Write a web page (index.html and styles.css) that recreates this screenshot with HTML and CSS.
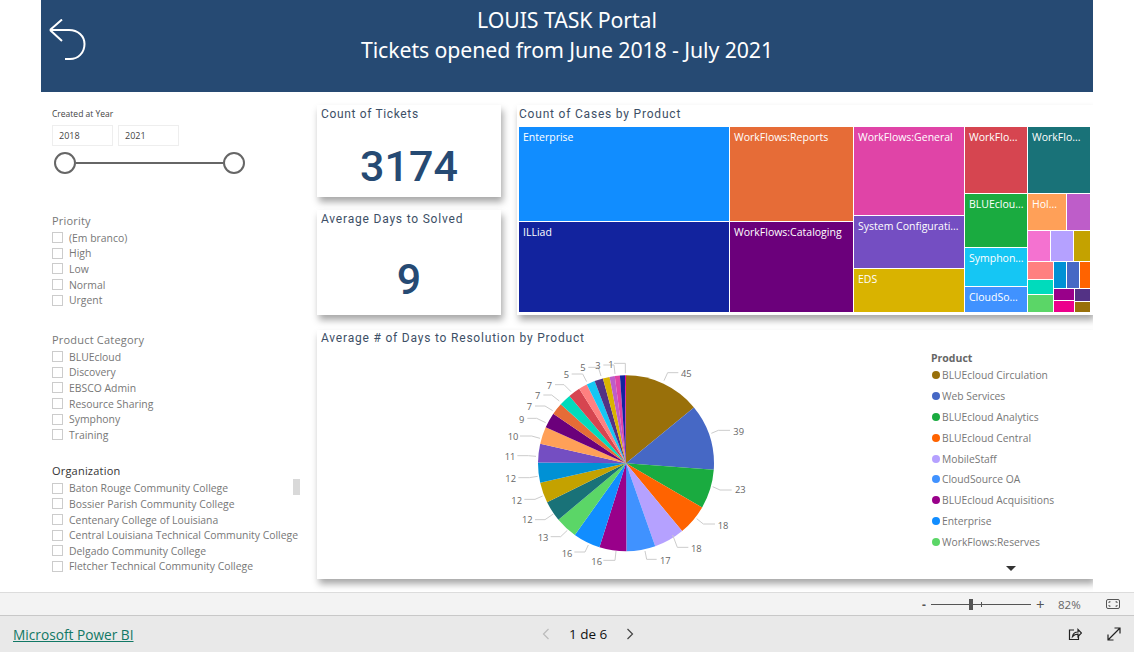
FILE: index.html
```html
<!DOCTYPE html>
<html lang="en">

<head>
    <meta charset="UTF-8">
    <meta name="viewport" content="width=device-width, initial-scale=1.0">
    <title>LOUIS TASK Portal</title>
    <link rel="stylesheet" href="styles.css">
</head>

<body>
    <div class="stage">
        <div class="report">
            <header class="banner">
                <svg class="back-icon" viewBox="0 0 37 42">
                    <path d="M1 11 L13 0.5 M1 11 L13 22 M1 11 H20 C29 11 35.5 17 35.5 25 C35.5 34 29 40 21 40 H16" />
                </svg>
                <h1>LOUIS TASK Portal<br>Tickets opened from June 2018 - July 2021</h1>
            </header>

            <div class="canvas">
                <aside class="filters">
                    <div class="year-slicer">
                        <div class="slicer-caption">Created at Year</div>
                        <div class="year-inputs">
                            <div class="year-box">2018</div>
                            <div class="year-box">2021</div>
                        </div>
                        <div class="year-range">
                            <span class="handle"></span>
                            <span class="range-line"></span>
                            <span class="handle"></span>
                        </div>
                    </div>

                    <div class="slicer slicer-priority">
                        <h3>Priority</h3>
                        <div class="check-row"><span class="box"></span>(Em branco)</div>
                        <div class="check-row"><span class="box"></span>High</div>
                        <div class="check-row"><span class="box"></span>Low</div>
                        <div class="check-row"><span class="box"></span>Normal</div>
                        <div class="check-row"><span class="box"></span>Urgent</div>
                    </div>

                    <div class="slicer slicer-category">
                        <h3>Product Category</h3>
                        <div class="check-row"><span class="box"></span>BLUEcloud</div>
                        <div class="check-row"><span class="box"></span>Discovery</div>
                        <div class="check-row"><span class="box"></span>EBSCO Admin</div>
                        <div class="check-row"><span class="box"></span>Resource Sharing</div>
                        <div class="check-row"><span class="box"></span>Symphony</div>
                        <div class="check-row"><span class="box"></span>Training</div>
                    </div>

                    <div class="slicer slicer-org">
                        <h3 class="dark">Organization</h3>
                        <div class="check-row"><span class="box"></span>Baton Rouge Community College</div>
                        <div class="check-row"><span class="box"></span>Bossier Parish Community College</div>
                        <div class="check-row"><span class="box"></span>Centenary College of Louisiana</div>
                        <div class="check-row"><span class="box"></span>Central Louisiana Technical Community College</div>
                        <div class="check-row"><span class="box"></span>Delgado Community College</div>
                        <div class="check-row"><span class="box"></span>Fletcher Technical Community College</div>
                        <span class="org-scroll"></span>
                    </div>
                </aside>

                <main class="visuals">
                    <div class="top-row">
                        <div class="kpi-stack">
                            <section class="card kpi kpi-count">
                                <div class="card-title">Count of Tickets</div>
                                <div class="kpi-value">3174</div>
                            </section>
                            <section class="card kpi kpi-days">
                                <div class="card-title">Average Days to Solved</div>
                                <div class="kpi-value">9</div>
                            </section>
                        </div>

                        <section class="card tree-card">
                            <div class="card-title">Count of Cases by Product</div>
                            <div class="tree">
                                <div class="tcol t-w210">
                                    <div class="tile c-enterprise t-h94">Enterprise</div>
                                    <div class="tile c-illiad t-grow">ILLiad</div>
                                </div>
                                <div class="tcol t-w123">
                                    <div class="tile c-reports t-h94">WorkFlows:Reports</div>
                                    <div class="tile c-cataloging t-grow">WorkFlows:Cataloging</div>
                                </div>
                                <div class="tcol t-w110">
                                    <div class="tile c-general t-h88">WorkFlows:General</div>
                                    <div class="tile c-system t-h52">System Configurati...</div>
                                    <div class="tile c-eds t-grow">EDS</div>
                                </div>
                                <div class="tcol t-w62">
                                    <div class="tile c-red t-h66">WorkFlo...</div>
                                    <div class="tile c-green t-h53">BLUEclou...</div>
                                    <div class="tile c-cyan t-h38">Symphon...</div>
                                    <div class="tile c-cloud t-grow">CloudSo...</div>
                                </div>
                                <div class="tcol t-grow">
                                    <div class="tile c-teal t-h66">WorkFlo...</div>
                                    <div class="trow t-h36">
                                        <div class="tile c-peach t-grow">Hol...</div>
                                        <div class="tile c-orchid t-w23"></div>
                                    </div>
                                    <div class="trow t-h30">
                                        <div class="tile c-pink t-grow"></div>
                                        <div class="tile c-lav t-grow"></div>
                                        <div class="tile c-gold t-w16"></div>
                                    </div>
                                    <div class="trow t-grow">
                                        <div class="tcol t-w25">
                                            <div class="tile c-salmon t-h17"></div>
                                            <div class="tile c-mint t-h14"></div>
                                            <div class="tile c-lime t-grow"></div>
                                        </div>
                                        <div class="tcol t-grow">
                                            <div class="trow t-h26">
                                                <div class="tile c-sky t-grow"></div>
                                                <div class="tile c-indigo t-grow"></div>
                                                <div class="tile c-orange t-w10"></div>
                                            </div>
                                            <div class="trow t-grow">
                                                <div class="tcol t-grow">
                                                    <div class="tile c-violet t-h11"></div>
                                                    <div class="tile c-magenta t-grow"></div>
                                                </div>
                                                <div class="tcol t-w15">
                                                    <div class="tile c-plum t-h12"></div>
                                                    <div class="tile c-brown t-grow"></div>
                                                </div>
                                            </div>
                                        </div>
                                    </div>
                                </div>
                            </div>
                        </section>
                    </div>

                    <section class="card pie-card">
                        <div class="card-title">Average # of Days to Resolution by Product</div>
                        <svg class="pie" viewBox="0 0 810 705">
                            <g transform="rotate(-90 408 340)" fill="none" stroke-width="264">
                                <circle class="s1" cx="408" cy="340" r="132" pathLength="321" stroke-dasharray="45 276" stroke-dashoffset="0" />
                                <circle class="s2" cx="408" cy="340" r="132" pathLength="321" stroke-dasharray="39 282" stroke-dashoffset="-45" />
                                <circle class="s3" cx="408" cy="340" r="132" pathLength="321" stroke-dasharray="23 298" stroke-dashoffset="-84" />
                                <circle class="s4" cx="408" cy="340" r="132" pathLength="321" stroke-dasharray="18 303" stroke-dashoffset="-107" />
                                <circle class="s5" cx="408" cy="340" r="132" pathLength="321" stroke-dasharray="18 303" stroke-dashoffset="-125" />
                                <circle class="s6" cx="408" cy="340" r="132" pathLength="321" stroke-dasharray="17 304" stroke-dashoffset="-143" />
                                <circle class="s7" cx="408" cy="340" r="132" pathLength="321" stroke-dasharray="16 305" stroke-dashoffset="-160" />
                                <circle class="s8" cx="408" cy="340" r="132" pathLength="321" stroke-dasharray="16 305" stroke-dashoffset="-176" />
                                <circle class="s9" cx="408" cy="340" r="132" pathLength="321" stroke-dasharray="13 308" stroke-dashoffset="-192" />
                                <circle class="s10" cx="408" cy="340" r="132" pathLength="321" stroke-dasharray="12 309" stroke-dashoffset="-205" />
                                <circle class="s11" cx="408" cy="340" r="132" pathLength="321" stroke-dasharray="12 309" stroke-dashoffset="-217" />
                                <circle class="s12" cx="408" cy="340" r="132" pathLength="321" stroke-dasharray="12 309" stroke-dashoffset="-229" />
                                <circle class="s13" cx="408" cy="340" r="132" pathLength="321" stroke-dasharray="11 310" stroke-dashoffset="-241" />
                                <circle class="s14" cx="408" cy="340" r="132" pathLength="321" stroke-dasharray="10 311" stroke-dashoffset="-252" />
                                <circle class="s15" cx="408" cy="340" r="132" pathLength="321" stroke-dasharray="9 312" stroke-dashoffset="-262" />
                                <circle class="s16" cx="408" cy="340" r="132" pathLength="321" stroke-dasharray="7 314" stroke-dashoffset="-271" />
                                <circle class="s17" cx="408" cy="340" r="132" pathLength="321" stroke-dasharray="7 314" stroke-dashoffset="-278" />
                                <circle class="s18" cx="408" cy="340" r="132" pathLength="321" stroke-dasharray="7 314" stroke-dashoffset="-285" />
                                <circle class="s19" cx="408" cy="340" r="132" pathLength="321" stroke-dasharray="5 316" stroke-dashoffset="-292" />
                                <circle class="s20" cx="408" cy="340" r="132" pathLength="321" stroke-dasharray="5 316" stroke-dashoffset="-297" />
                                <circle class="s21" cx="408" cy="340" r="132" pathLength="321" stroke-dasharray="5 316" stroke-dashoffset="-302" />
                                <circle class="s22" cx="408" cy="340" r="132" pathLength="321" stroke-dasharray="4 317" stroke-dashoffset="-307" />
                                <circle class="s23" cx="408" cy="340" r="132" pathLength="321" stroke-dasharray="3 318" stroke-dashoffset="-311" />
                                <circle class="s24" cx="408" cy="340" r="132" pathLength="321" stroke-dasharray="3 318" stroke-dashoffset="-314" />
                                <circle class="s25" cx="408" cy="340" r="132" pathLength="321" stroke-dasharray="3 318" stroke-dashoffset="-317" />
                                <circle class="s26" cx="408" cy="340" r="132" pathLength="321" stroke-dasharray="1 320" stroke-dashoffset="-320" />
                            </g>
                            <g class="leaders">
                                <path d="M522 92 L533 68 H565" />
                                <path d="M664 250 L685 241 H720" />
                                <path d="M668 410 L690 420 H725" />
                                <path d="M620 506 L640 522 H675" />
                                <path d="M548 555 L562 592 H595" />
                                <path d="M465 603 L470 628 H500" />
                                <path d="M378 603 L375 631 H340" />
                                <path d="M295 585 L285 606 H253" />
                                <path d="M232 541 L212 560 H182" />
                                <path d="M190 492 L165 509 H135" />
                                <path d="M158 438 L135 448 H103" />
                                <path d="M143 379 L118 383 H85" />
                                <path d="M138 319 L115 317 H82" />
                                <path d="M150 265 L125 258 H90" />
                                <path d="M167 218 L140 205 H112" />
                                <path d="M188 182 L165 168 H135" />
                                <path d="M208 153 L185 135 H160" />
                                <path d="M243 125 L222 104 H195" />
                                <path d="M290 95 L278 72 H245" />
                                <path d="M333 78 L325 52 H295" />
                                <path d="M375 72 L372 45 H340" />
                                <path d="M406 70 V40 H372" />
                            </g>
                            <g class="pie-labels">
                                <text x="573" y="82">45</text>
                                <text x="730" y="255">39</text>
                                <text x="735" y="429">23</text>
                                <text x="683" y="537">18</text>
                                <text x="603" y="605">18</text>
                                <text x="510" y="641">17</text>
                                <text x="304" y="644">16</text>
                                <text x="215" y="621">16</text>
                                <text x="143" y="573">13</text>
                                <text x="96" y="519">12</text>
                                <text x="64" y="461">12</text>
                                <text x="46" y="395">12</text>
                                <text x="44" y="330">11</text>
                                <text x="53" y="270">10</text>
                                <text x="87" y="218">9</text>
                                <text x="110" y="180">7</text>
                                <text x="135" y="147">7</text>
                                <text x="170" y="117">7</text>
                                <text x="221" y="84">5</text>
                                <text x="271" y="64">5</text>
                                <text x="316" y="57">3</text>
                                <text x="355" y="54">1</text>
                            </g>
                        </svg>
                        <div class="legend">
                            <div class="legend-title">Product</div>
                            <div class="legend-item"><span class="dot d1"></span>BLUEcloud Circulation</div>
                            <div class="legend-item"><span class="dot d2"></span>Web Services</div>
                            <div class="legend-item"><span class="dot d3"></span>BLUEcloud Analytics</div>
                            <div class="legend-item"><span class="dot d4"></span>BLUEcloud Central</div>
                            <div class="legend-item"><span class="dot d5"></span>MobileStaff</div>
                            <div class="legend-item"><span class="dot d6"></span>CloudSource OA</div>
                            <div class="legend-item"><span class="dot d7"></span>BLUEcloud Acquisitions</div>
                            <div class="legend-item"><span class="dot d8"></span>Enterprise</div>
                            <div class="legend-item"><span class="dot d9"></span>WorkFlows:Reserves</div>
                            <div class="legend-more"></div>
                        </div>
                    </section>
                </main>
            </div>
        </div>
    </div>

    <div class="zoom-bar">
        <span class="zoom-sign">-</span>
        <div class="zoom-track"><span class="zoom-tick"></span><span class="zoom-thumb"></span></div>
        <span class="zoom-sign plus">+</span>
        <span class="zoom-pct">82%</span>
        <svg class="fit-icon" viewBox="0 0 14 10">
            <rect x="0.5" y="0.5" width="13" height="9" rx="1.5" />
            <path d="M3 4 V2.8 H4.5 M11 4 V2.8 H9.5 M3 6 V7.2 H4.5 M11 6 V7.2 H9.5" />
        </svg>
    </div>

    <footer class="footer">
        <a class="pbi-link" href="#">Microsoft Power BI</a>
        <div class="pager">
            <svg class="chev off" viewBox="0 0 8 12"><path d="M6.5 1 L1.5 6 L6.5 11" /></svg>
            <span class="page-num">1 de 6</span>
            <svg class="chev" viewBox="0 0 8 12"><path d="M1.5 1 L6.5 6 L1.5 11" /></svg>
        </div>
        <div class="foot-icons">
            <svg class="foot-icon" viewBox="0 0 14 14">
                <path d="M6 3 H1.5 V12.5 H10.5 V9" />
                <path d="M4.5 9.5 C5 6.5 7 5 10 5 V2.5 L13.5 6 L10 9.5 V7.2 C8 7.2 6 7.8 4.5 9.5 Z" />
            </svg>
            <svg class="foot-icon" viewBox="0 0 14 14">
                <path d="M1 13 L13 1 M7.5 1 H13 V6.5 M1 7.5 V13 H6.5" />
            </svg>
        </div>
    </footer>
</body>

</html>
```

FILE: styles.css
```css
* {
    box-sizing: border-box;
}

html,
body {
    height: 100%;
}

body {
    display: flex;
    flex-direction: column;
    margin: 0;
    overflow: hidden;
    font-family: "Open Sans", "Noto Sans", Arial, sans-serif;
    background-color: #fff;
}

.stage {
    flex: 1;
    min-height: 0;
    padding: 0 41px;
}

.report {
    height: 100%;
    overflow: hidden;
}

/* header */
.banner {
    position: relative;
    height: 92px;
    padding-top: 5px;
    background-color: #264a73;
    color: #fff;
}

.banner h1 {
    margin: 0;
    font-size: 21.3px;
    font-weight: 400;
    line-height: 30px;
    text-align: center;
    letter-spacing: -0.1px;
    font-family: "Noto Sans", Arial, sans-serif;
}

.back-icon {
    position: absolute;
    left: 8px;
    top: 19px;
    width: 37px;
    height: 42px;
    fill: none;
    stroke: #fff;
    stroke-width: 2;
}

.canvas {
    display: flex;
}

/* left slicers */
.filters {
    width: 276px;
    padding: 16px 0 0 11px;
    color: #777;
}

.slicer-caption {
    font-size: 8.5px;
    line-height: 11px;
    color: #444;
}

.year-inputs {
    display: flex;
    gap: 5px;
    margin-top: 6px;
}

.year-box {
    width: 61px;
    height: 21px;
    padding-left: 6px;
    border: 1px solid #eee;
    font-size: 9px;
    line-height: 20px;
    color: #444;
}

.year-range {
    display: flex;
    align-items: center;
    width: 191px;
    margin: 6px 0 0 2px;
}

.handle {
    width: 22px;
    height: 22px;
    flex: none;
    border: 2px solid #666;
    border-radius: 50%;
    background-color: #fff;
}

.range-line {
    flex: 1;
    height: 2px;
    background-color: #666;
}

.slicer {
    position: relative;
    width: 250px;
}

.slicer h3 {
    margin: 0 0 2px;
    font-size: 11px;
    line-height: 15px;
    font-weight: 400;
    color: #777;
    letter-spacing: 0.2px;
}

.slicer h3.dark {
    margin-bottom: 3px;
    color: #333;
}

.slicer-priority {
    margin-top: 39px;
}

.slicer-category {
    margin-top: 24px;
}

.slicer-org {
    margin-top: 20px;
}

.check-row {
    display: flex;
    align-items: center;
    height: 15.6px;
    font-size: 10.4px;
    white-space: nowrap;
    color: #777;
}

.box {
    width: 11px;
    height: 11px;
    flex: none;
    margin-right: 6px;
    border: 1px solid #ccc;
}

.org-scroll {
    position: absolute;
    left: 241px;
    top: 16px;
    width: 7px;
    height: 16px;
    background-color: #d9d9d9;
}

/* visuals */
.visuals {
    flex: 1;
    min-width: 0;
    padding-top: 13px;
}

.top-row {
    display: flex;
    gap: 16px;
}

.kpi-stack {
    display: flex;
    flex-direction: column;
    gap: 13px;
    width: 184px;
}

.card {
    background-color: #fff;
    box-shadow: 2px 5px 7px rgba(0, 0, 0, 0.35);
}

.card-title {
    padding: 1px 0 0 4px;
    font-family: "Roboto", "Liberation Sans", sans-serif;
    font-size: 12px;
    line-height: 16px;
    letter-spacing: 0.8px;
    color: #3d4f66;
}

.kpi-count .card-title {
    letter-spacing: 0.65px;
}

.kpi-count {
    height: 92px;
}

.kpi-days {
    height: 105px;
}

.kpi-value {
    font-family: "Roboto", "Liberation Sans", sans-serif;
    font-weight: 500;
    text-align: center;
    font-size: 43px;
    color: #264a73;
}

.kpi-count .kpi-value {
    margin-top: 19px;
    line-height: 50px;
}

.kpi-days .kpi-value {
    margin-top: 27px;
    line-height: 50px;
}

/* treemap */
.tree-card {
    flex: 1;
    height: 210px;
    padding-left: 2px;
}

.tree-card .card-title {
    padding-left: 0;
}

.tree {
    display: flex;
    gap: 1px;
    width: 571px;
    height: 185px;
    margin-top: 5px;
}

.tcol,
.trow {
    display: flex;
    gap: 1px;
    min-width: 0;
    min-height: 0;
}

.tcol {
    flex-direction: column;
}

.tile {
    min-width: 0;
    min-height: 0;
    padding: 3px 4px;
    font-size: 10.5px;
    line-height: 14px;
    color: #fff;
    white-space: nowrap;
    overflow: hidden;
}

.t-grow { flex: 1; }
.t-w210 { width: 210px; }
.t-w123 { width: 123px; }
.t-w110 { width: 110px; }
.t-w62 { width: 62px; }
.t-w25 { width: 25px; }
.t-w23 { width: 23px; }
.t-w16 { width: 16px; }
.t-w15 { width: 15px; }
.t-w10 { width: 10px; }
.t-h94 { height: 94px; }
.t-h88 { height: 88px; }
.t-h66 { height: 66px; }
.t-h53 { height: 53px; }
.t-h52 { height: 52px; }
.t-h38 { height: 38px; }
.t-h36 { height: 36px; }
.t-h30 { height: 30px; }
.t-h26 { height: 26px; }
.t-h17 { height: 17px; }
.t-h14 { height: 14px; }
.t-h12 { height: 12px; }
.t-h11 { height: 11px; }

.c-enterprise { background-color: #118dff; }
.c-illiad { background-color: #12239e; }
.c-reports { background-color: #e66c37; }
.c-cataloging { background-color: #6b007b; }
.c-general { background-color: #e044a7; }
.c-system { background-color: #744ec2; }
.c-eds { background-color: #d9b300; }
.c-red { background-color: #d64550; }
.c-green { background-color: #1aab40; }
.c-cyan { background-color: #15c6f4; }
.c-cloud { background-color: #4092ff; }
.c-teal { background-color: #197278; }
.c-peach { background-color: #ffa058; }
.c-orchid { background-color: #be5dc9; }
.c-pink { background-color: #f472d0; }
.c-lav { background-color: #b5a1ff; }
.c-gold { background-color: #c4a200; }
.c-salmon { background-color: #ff8080; }
.c-mint { background-color: #00dbbc; }
.c-lime { background-color: #5bd667; }
.c-sky { background-color: #0091d5; }
.c-indigo { background-color: #4668c5; }
.c-orange { background-color: #ff6300; }
.c-violet { background-color: #99008a; }
.c-magenta { background-color: #ec008c; }
.c-plum { background-color: #533285; }
.c-brown { background-color: #99700a; }

/* pie */
.pie-card {
    position: relative;
    height: 249px;
    margin-top: 15px;
}

.pie-card .card-title {
    padding-top: 0;
}

.pie {
    position: absolute;
    left: 173px;
    top: 20px;
    width: 270px;
    height: 235px;
}

.s1 { stroke: #99700a; }
.s2 { stroke: #4668c5; }
.s3 { stroke: #1aab40; }
.s4 { stroke: #ff6300; }
.s5 { stroke: #b5a1ff; }
.s6 { stroke: #4092ff; }
.s7 { stroke: #99008a; }
.s8 { stroke: #118dff; }
.s9 { stroke: #5bd667; }
.s10 { stroke: #197278; }
.s11 { stroke: #c4a200; }
.s12 { stroke: #0091d5; }
.s13 { stroke: #744ec2; }
.s14 { stroke: #ffa058; }
.s15 { stroke: #6b007b; }
.s16 { stroke: #e66c37; }
.s17 { stroke: #00dbbc; }
.s18 { stroke: #d64550; }
.s19 { stroke: #ff8080; }
.s20 { stroke: #15c6f4; }
.s21 { stroke: #533285; }
.s22 { stroke: #d9b300; }
.s23 { stroke: #be5dc9; }
.s24 { stroke: #e044a7; }
.s25 { stroke: #12239e; }
.s26 { stroke: #ec008c; }

.leaders path {
    fill: none;
    stroke: #ccc;
    stroke-width: 3;
}

.pie-labels text {
    font-family: "Open Sans", Arial, sans-serif;
    font-size: 28px;
    fill: #666;
}

.legend {
    position: absolute;
    left: 614px;
    top: 21px;
    width: 162px;
}

.legend-title {
    font-size: 10.5px;
    font-weight: 700;
    line-height: 14px;
    color: #666;
}

.legend-item {
    display: flex;
    align-items: center;
    height: 20.8px;
    font-size: 10.3px;
    white-space: nowrap;
    color: #777;
}

.dot {
    width: 8px;
    height: 8px;
    flex: none;
    margin: 0 2px 0 1px;
    border-radius: 50%;
}

.d1 { background-color: #99700a; }
.d2 { background-color: #4668c5; }
.d3 { background-color: #1aab40; }
.d4 { background-color: #ff6300; }
.d5 { background-color: #b5a1ff; }
.d6 { background-color: #4092ff; }
.d7 { background-color: #99008a; }
.d8 { background-color: #118dff; }
.d9 { background-color: #5bd667; }

.legend-more {
    width: 0;
    height: 0;
    margin: 14px 0 0 75px;
    border-left: 5px solid transparent;
    border-right: 5px solid transparent;
    border-top: 5px solid #333;
}

/* zoom strip and footer */
.zoom-bar {
    display: flex;
    align-items: center;
    flex: none;
    height: 23px;
    padding-left: 922px;
    border-top: 1px solid #dcdcdc;
    background-color: #f3f3f3;
    color: #555;
    font-size: 11px;
}

.zoom-sign {
    width: 9px;
    font-weight: 700;
    font-size: 12px;
}

.zoom-sign.plus {
    width: 22px;
    margin-left: 5px;
    font-weight: 400;
    font-size: 15px;
}

.zoom-track {
    position: relative;
    width: 100px;
    height: 1px;
    background-color: #555;
}

.zoom-thumb {
    position: absolute;
    left: 38px;
    top: -5px;
    width: 4px;
    height: 11px;
    background-color: #555;
}

.zoom-tick {
    position: absolute;
    left: 50px;
    top: -2px;
    width: 1px;
    height: 5px;
    background-color: #555;
}

.zoom-pct {
    width: 48px;
    font-size: 11.5px;
    color: #666;
}

.fit-icon {
    width: 14px;
    height: 10px;
    fill: none;
    stroke: #555;
    stroke-width: 1;
}

.footer {
    display: flex;
    align-items: center;
    flex: none;
    position: relative;
    height: 37px;
    padding: 0 13px;
    border-top: 1px solid #c8c8c8;
    background-color: #e9e9e9;
}

.pbi-link {
    font-size: 13.7px;
    color: #117865;
    font-family: "Open Sans", Arial, sans-serif;
}

.pager {
    position: absolute;
    left: 542px;
    top: 0;
    bottom: 0;
    display: flex;
    align-items: center;
    gap: 19px;
}

.page-num {
    font-size: 13.5px;
    color: #111;
}

.chev {
    width: 8px;
    height: 12px;
    fill: none;
    stroke: #444;
    stroke-width: 1.2;
}

.chev.off {
    stroke: #bbb;
}

.foot-icons {
    display: flex;
    gap: 25px;
    margin-left: auto;
}

.foot-icon {
    width: 14px;
    height: 14px;
    fill: none;
    stroke: #222;
    stroke-width: 1.2;
}
```
